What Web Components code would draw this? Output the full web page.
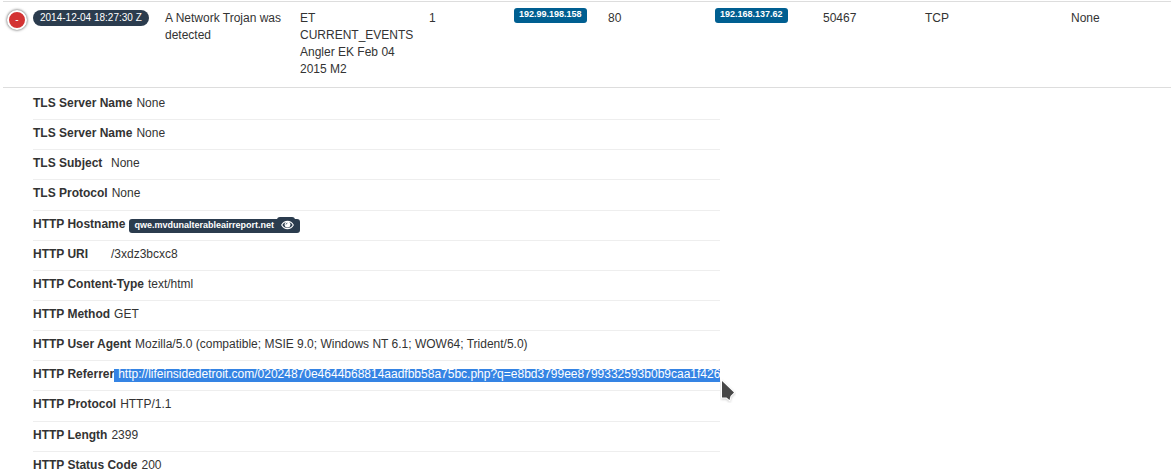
<!DOCTYPE html>
<html lang="en">
<head>
<meta charset="utf-8">
<title>Alert events</title>
<style>
  body { margin: 0; background: #fff; color: #333; font: 12px/17px "Liberation Sans", Arial, sans-serif; overflow: hidden; }
</style>
</head>
<body>
<alert-table></alert-table>

<template id="row-toggle">
  <style>
    :host { display: block; }
    button {
      display: block; box-sizing: border-box; width: 20px; height: 20px; padding: 0; margin: 0;
      border: 2px solid #fff; border-radius: 50%; background: #d33333; color: #fff;
      box-shadow: 0 0 3px #444; font: 10px/14px "Liberation Sans", Arial, sans-serif; text-align: center; cursor: pointer;
    }
  </style>
  <button type="button" aria-label="Collapse row" aria-expanded="true">-</button>
</template>

<template id="time-badge">
  <style>
    :host { display: block; width: fit-content; box-sizing: border-box; padding: 0 7px; border-radius: 8px;
      background: #2b3c4e; color: #fff; font-size: 10px; line-height: 16px; white-space: nowrap; }
  </style>
  <slot></slot>
</template>

<template id="ip-label">
  <style>
    :host { display: block; width: fit-content; }
    a { display: block; padding: 0 5px 3px; border-radius: 3px; background: #005f91; color: #fff;
      font-weight: bold; font-size: 9px; line-height: 12px; text-decoration: none; white-space: nowrap; }
  </style>
  <a href="#"><slot></slot></a>
</template>

<template id="host-label">
  <style>
    :host { display: flex; width: fit-content; height: 14px; margin-top: 3px; border-radius: 3px; background: #2b3c4e; color: #fff;
      font-weight: bold; font-size: 9px; line-height: 13px; }
    a { color: inherit; text-decoration: none; padding-left: 5px; }
    button { display: block; box-sizing: border-box; width: 18px; height: 14px; margin: -2px 5px 0 3px; padding: 1px 0 0 4px; border: 0;
      border-radius: 3px; background: #2b3c4e; color: inherit; cursor: pointer; }
    svg { display: block; }
  </style>
  <a href="#"><slot></slot></a>
  <button type="button" aria-label="Show host details">
    <svg width="13" height="12" viewBox="0 0 13 12" fill="none" stroke="#fff">
      <path d="M.7 6C2 3.7 4 2.4 6.500 2.400S11 3.700 12.300 6C11 8.300 9 9.600 6.500 9.600S2 8.300 .7 6Z" stroke-width="1.100"/>
      <circle cx="6.500" cy="5.600" r="2.900" fill="#fff" stroke="none"/>
      <path d="M5 5.500Q5.100 4.200 6.400 4.100" stroke="#2b3c4e" stroke-width=".8"/>
    </svg>
  </button>
</template>

<template id="detail-item">
  <style>
    :host { display: block; border-top: 1px solid #eee; }
    dl { display: flex; gap: 4px; margin: 0; padding: 5px 0 7px; }
    dt { min-width: 74px; font-weight: bold; white-space: nowrap; }
    dd { margin: 0; white-space: nowrap; }
    :host([selected]) { position: relative; }
    :host([selected]) dl { gap: 0; }
    :host([selected]) dd { height: 13px; margin-top: 3px; line-height: 11px; padding-left: 4px; background: #3584e4; color: #fff; }
    svg { display: none; }
    :host([selected]) svg { display: block; position: absolute; left: 100%; top: 18px; }
  </style>
  <dl><dt><slot name="label"></slot></dt><dd><slot></slot></dd></dl>
  <svg width="16" height="24" viewBox="0 0 16 24" aria-hidden="true">
    <path d="M2 2V18.500H6.500L9.500 21 10.500 17 14 13.500Z" fill="#474747" stroke="#fff" stroke-width="2" paint-order="stroke" style="filter:drop-shadow(0 1px 1px #0003)"/>
  </svg>
</template>

<template id="detail-group">
  <style>
    :host { display: block; }
  </style>
  <slot></slot>
</template>

<template id="alert-table">
  <style>
    :host { display: block; padding: 1px 0 0 3px; }
    table { width: 100%; table-layout: fixed; border-collapse: separate; border-spacing: 0; }
    td { padding: 8px 5px 9px; border-top: 1px solid #ddd; vertical-align: top; text-align: left; }
    td.badge { padding-top: 6px; }
    td.toggle { padding: 8px 0 0 4px; }
    td.details { padding: 2px 5px 0 30px; }
    .list { width: fit-content; }
    detail-group + detail-group { margin-top: 1px; }
    detail-group:first-child > detail-item:first-child { border-top: 0; }
  </style>
  <table>
    <colgroup>
      <col style="width:25px"><col style="width:132px"><col style="width:135px"><col style="width:129px">
      <col style="width:85px"><col style="width:94px"><col style="width:107px"><col style="width:108px">
      <col style="width:102px"><col style="width:146px"><col style="width:105px">
    </colgroup>
    <tbody>
      <tr>
        <td class="toggle"><row-toggle></row-toggle></td>
        <td><time-badge>2014-12-04 18:27:30 Z</time-badge></td>
        <td>A Network Trojan was detected</td>
        <td>ET CURRENT_EVENTS Angler EK Feb 04 2015 M2</td>
        <td>1</td>
        <td class="badge"><ip-label>192.99.198.158</ip-label></td>
        <td>80</td>
        <td class="badge"><ip-label>192.168.137.62</ip-label></td>
        <td>50467</td>
        <td>TCP</td>
        <td>None</td>
      </tr>
      <tr>
        <td class="details" colspan="11">
          <div class="list">
            <detail-group>
              <detail-item><span slot="label">TLS Server Name</span>None</detail-item>
              <detail-item><span slot="label">TLS Server Name</span>None</detail-item>
              <detail-item><span slot="label">TLS Subject</span>None</detail-item>
              <detail-item><span slot="label">TLS Protocol</span>None</detail-item>
            </detail-group>
            <detail-group>
              <detail-item><span slot="label">HTTP Hostname</span><host-label>qwe.mvdunalterableairreport.net</host-label></detail-item>
              <detail-item><span slot="label">HTTP URI</span>/3xdz3bcxc8</detail-item>
              <detail-item><span slot="label">HTTP Content-Type</span>text/html</detail-item>
              <detail-item><span slot="label">HTTP Method</span>GET</detail-item>
              <detail-item><span slot="label">HTTP User Agent</span>Mozilla/5.0 (compatible; MSIE 9.0; Windows NT 6.1; WOW64; Trident/5.0)</detail-item>
              <detail-item selected><span slot="label">HTTP Referrer</span>http://lifeinsidedetroit.com/02024870e4644b68814aadfbb58a75bc.php?q=e8bd3799ee8799332593b0b9caa1f426</detail-item>
              <detail-item><span slot="label">HTTP Protocol</span>HTTP/1.1</detail-item>
            </detail-group>
            <detail-group>
              <detail-item><span slot="label">HTTP Length</span>2399</detail-item>
              <detail-item><span slot="label">HTTP Status Code</span>200</detail-item>
            </detail-group>
          </div>
        </td>
      </tr>
    </tbody>
  </table>
</template>

<script>
  class TemplateElement extends HTMLElement {
    constructor() {
      super();
      const template = document.getElementById(this.localName);
      this.attachShadow({ mode: "open" }).append(template.content.cloneNode(true));
    }
  }
  customElements.define("row-toggle", class RowToggle extends TemplateElement {});
  customElements.define("time-badge", class TimeBadge extends TemplateElement {});
  customElements.define("ip-label", class IpLabel extends TemplateElement {});
  customElements.define("host-label", class HostLabel extends TemplateElement {});
  customElements.define("detail-item", class DetailItem extends TemplateElement {});
  customElements.define("detail-group", class DetailGroup extends TemplateElement {});
  customElements.define("alert-table", class AlertTable extends TemplateElement {});
</script>
</body>
</html>
